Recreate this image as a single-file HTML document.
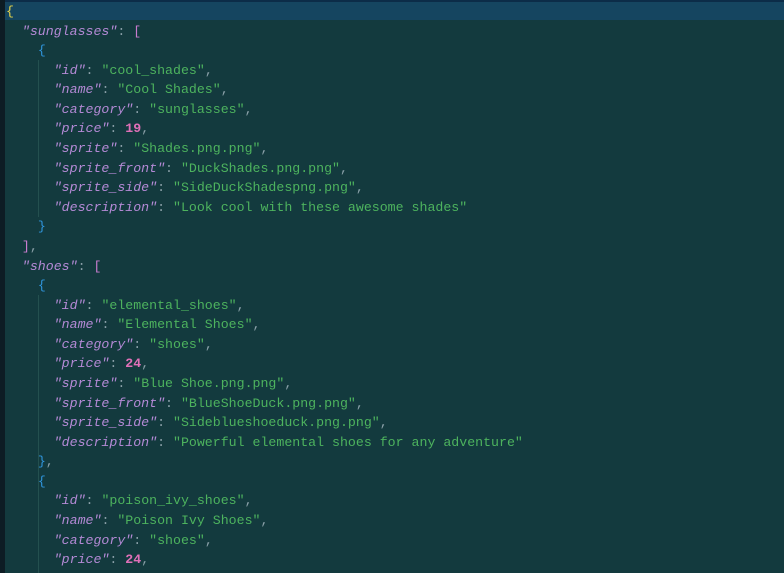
<!DOCTYPE html>
<html><head><style>
body{margin:0;width:784px;height:573px;overflow:hidden;background:#133a3e;position:relative;font-family:"Liberation Mono",monospace;font-size:13.25px;}
.strip{position:absolute;left:0;top:0;width:5px;height:573px;background:#0d1c24;}
.top{position:absolute;left:5px;top:0;right:0;height:2px;background:#0c2c48;}
.band{position:absolute;left:5px;top:2px;right:0;height:18px;background:#154560;}
.g{position:absolute;width:1px;background:#24504f;}
.code{position:absolute;left:6px;top:2px;margin:0;white-space:pre;color:#8aa2a8;font:inherit;line-height:19.58px;}
.k{color:#b48ad6;font-style:italic}
.s{color:#4db35e}
.n{color:#e070b8;font-weight:bold}
.p{color:#8aa0a8}
.y{color:#e6d44a}
.m{color:#c97ccf}
.b{color:#2f95dc}
</style></head><body>
<div class="strip"></div><div class="top"></div><div class="band"></div>
<div class="g" style="left:38px;top:60px;height:157px"></div>
<div class="g" style="left:38px;top:295px;height:278px"></div>
<pre class="code"><span class="y">{</span>
  <span class="k">"sunglasses"</span><span class="p">: </span><span class="m">[</span>
    <span class="b">{</span>
      <span class="k">"id"</span><span class="p">: </span><span class="s">"cool_shades"</span><span class="p">,</span>
      <span class="k">"name"</span><span class="p">: </span><span class="s">"Cool Shades"</span><span class="p">,</span>
      <span class="k">"category"</span><span class="p">: </span><span class="s">"sunglasses"</span><span class="p">,</span>
      <span class="k">"price"</span><span class="p">: </span><span class="n">19</span><span class="p">,</span>
      <span class="k">"sprite"</span><span class="p">: </span><span class="s">"Shades.png.png"</span><span class="p">,</span>
      <span class="k">"sprite_front"</span><span class="p">: </span><span class="s">"DuckShades.png.png"</span><span class="p">,</span>
      <span class="k">"sprite_side"</span><span class="p">: </span><span class="s">"SideDuckShadespng.png"</span><span class="p">,</span>
      <span class="k">"description"</span><span class="p">: </span><span class="s">"Look cool with these awesome shades"</span>
    <span class="b">}</span>
  <span class="m">]</span><span class="p">,</span>
  <span class="k">"shoes"</span><span class="p">: </span><span class="m">[</span>
    <span class="b">{</span>
      <span class="k">"id"</span><span class="p">: </span><span class="s">"elemental_shoes"</span><span class="p">,</span>
      <span class="k">"name"</span><span class="p">: </span><span class="s">"Elemental Shoes"</span><span class="p">,</span>
      <span class="k">"category"</span><span class="p">: </span><span class="s">"shoes"</span><span class="p">,</span>
      <span class="k">"price"</span><span class="p">: </span><span class="n">24</span><span class="p">,</span>
      <span class="k">"sprite"</span><span class="p">: </span><span class="s">"Blue Shoe.png.png"</span><span class="p">,</span>
      <span class="k">"sprite_front"</span><span class="p">: </span><span class="s">"BlueShoeDuck.png.png"</span><span class="p">,</span>
      <span class="k">"sprite_side"</span><span class="p">: </span><span class="s">"Sideblueshoeduck.png.png"</span><span class="p">,</span>
      <span class="k">"description"</span><span class="p">: </span><span class="s">"Powerful elemental shoes for any adventure"</span>
    <span class="b">}</span><span class="p">,</span>
    <span class="b">{</span>
      <span class="k">"id"</span><span class="p">: </span><span class="s">"poison_ivy_shoes"</span><span class="p">,</span>
      <span class="k">"name"</span><span class="p">: </span><span class="s">"Poison Ivy Shoes"</span><span class="p">,</span>
      <span class="k">"category"</span><span class="p">: </span><span class="s">"shoes"</span><span class="p">,</span>
      <span class="k">"price"</span><span class="p">: </span><span class="n">24</span><span class="p">,</span></pre>
</body></html>
